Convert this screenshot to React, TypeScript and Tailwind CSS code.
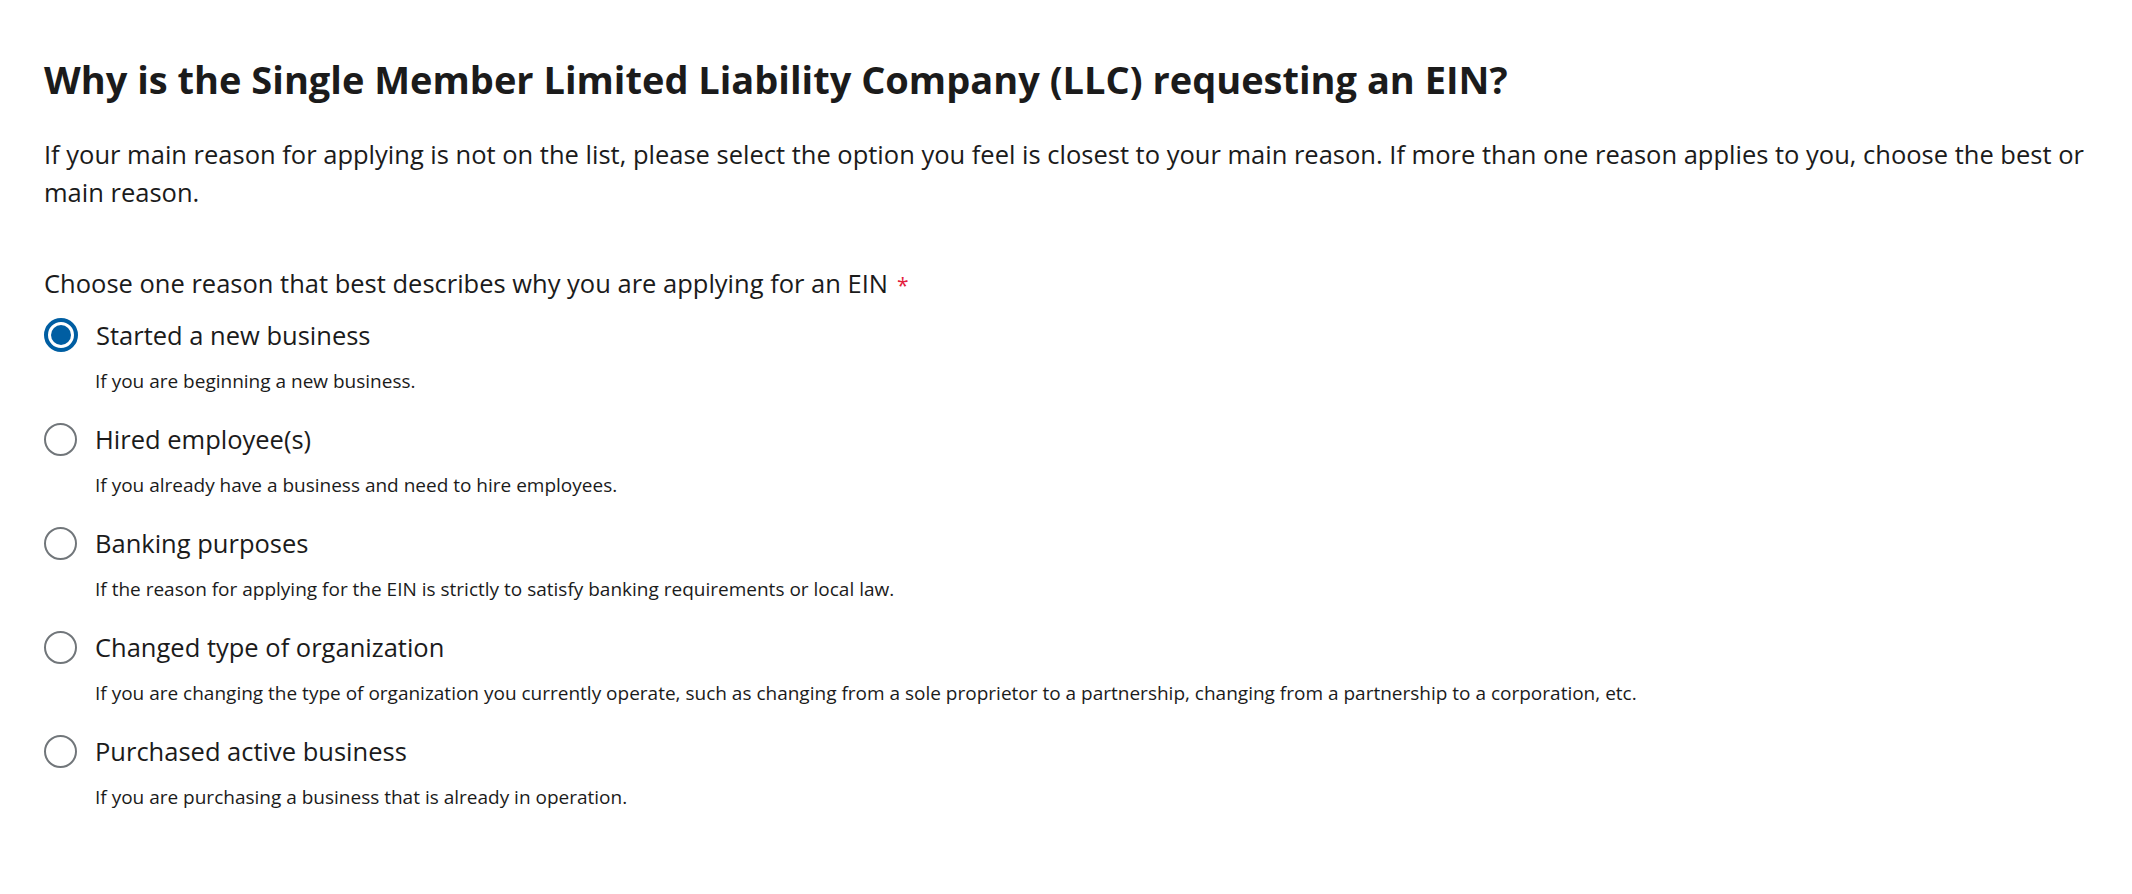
import React from "react";

const options = [
  {
    id: "new",
    label: "Started a new business",
    hint: "If you are beginning a new business.",
  },
  {
    id: "hired",
    label: "Hired employee(s)",
    hint: "If you already have a business and need to hire employees.",
  },
  {
    id: "banking",
    label: "Banking purposes",
    hint: "If the reason for applying for the EIN is strictly to satisfy banking requirements or local law.",
  },
  {
    id: "changed",
    label: "Changed type of organization",
    hint: "If you are changing the type of organization you currently operate, such as changing from a sole proprietor to a partnership, changing from a partnership to a corporation, etc.",
  },
  {
    id: "purchased",
    label: "Purchased active business",
    hint: "If you are purchasing a business that is already in operation.",
  },
];

/**
 * EIN reason radio question
 */
export default function App() {
  const [selected, setSelected] = React.useState<string>("new");

  return (
    <main className="min-h-[894px] w-full bg-white px-[44px] pt-[56px] font-['Open_Sans','Liberation_Sans',sans-serif] text-[#1b1b1b]">
      <h1 className="text-[38px] font-bold leading-[46px]">
        Why is the Single Member Limited Liability Company (LLC) requesting an EIN?
      </h1>
      <p className="mt-[33px] text-[25.5px] leading-[38px]">
        If your main reason for applying is not on the list, please select the option you feel is closest to your
        main reason. If more than one reason applies to you, choose the best or main reason.
      </p>

      <fieldset className="mt-[56px]">
        <legend className="text-[25.5px] leading-[32px]">
          Choose one reason that best describes why you are applying for an EIN
          <span className="ml-[9px] text-[21px] text-[#e31c3d]">*</span>
        </legend>

        <div className="mt-[14px] flex flex-col gap-[25px]">
          {options.map((opt) => {
            const checked = selected === opt.id;
            return (
              <label key={opt.id} className="flex cursor-pointer flex-col">
                <div className="flex h-[40px] items-center gap-[18px]">
                  <input
                    type="radio"
                    name="reason"
                    className="sr-only"
                    checked={checked}
                    onChange={() => setSelected(opt.id)}
                  />
                  {checked ? (
                    <span className="h-[34px] w-[34px] shrink-0 rounded-full border-[4px] border-[#005ea2] bg-white p-[3px]">
                      <span className="block h-full w-full rounded-full bg-[#005ea2]" />
                    </span>
                  ) : (
                    <span className="h-[33px] w-[33px] shrink-0 rounded-full border-[2px] border-[#71767a] bg-white" />
                  )}
                  <span className="text-[25.5px]">{opt.label}</span>
                </div>
                <span className="mt-[13px] pl-[51px] text-[19px] leading-[26px]">{opt.hint}</span>
              </label>
            );
          })}
        </div>
      </fieldset>
    </main>
  );
}
